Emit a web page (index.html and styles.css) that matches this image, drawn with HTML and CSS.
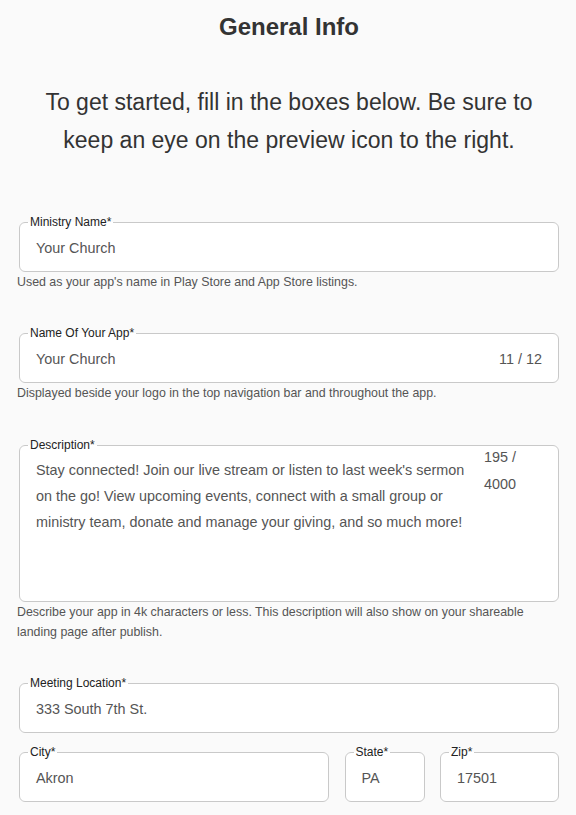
FILE: index.html
```
<!DOCTYPE html>
<html lang="en">
<head>
<meta charset="utf-8">
<title>General Info</title>
<link rel="stylesheet" href="styles.css">
</head>
<body>
<main class="page">
  <h1 class="title">General Info</h1>
  <p class="intro">To get started, fill in the boxes below. Be sure to keep an eye on the preview icon to the right.</p>

  <div class="form">
    <fieldset class="field first">
      <legend class="label">Ministry Name*</legend>
      <div class="value-row"><span class="value">Your Church</span></div>
    </fieldset>
    <p class="helper">Used as your app's name in Play Store and App Store listings.</p>

    <fieldset class="field">
      <legend class="label">Name Of Your App*</legend>
      <div class="value-row"><span class="value">Your Church</span><span class="count">11 / 12</span></div>
    </fieldset>
    <p class="helper">Displayed beside your logo in the top navigation bar and throughout the app.</p>

    <fieldset class="field desc">
      <legend class="label">Description*</legend>
      <div class="desc-body">
        <div class="desc-text">Stay connected! Join our live stream or listen to last week's sermon on the go! View upcoming events, connect with a small group or ministry team, donate and manage your giving, and so much more!</div>
        <div class="desc-count">195 / 4000</div>
      </div>
    </fieldset>
    <p class="helper">Describe your app in 4k characters or less. This description will also show on your shareable landing page after publish.</p>

    <fieldset class="field">
      <legend class="label">Meeting Location*</legend>
      <div class="value-row"><span class="value">333 South 7th St.</span></div>
    </fieldset>

    <div class="row">
      <fieldset class="field">
        <legend class="label">City*</legend>
        <div class="value-row"><span class="value">Akron</span></div>
      </fieldset>
      <fieldset class="field">
        <legend class="label">State*</legend>
        <div class="value-row"><span class="value">PA</span></div>
      </fieldset>
      <fieldset class="field">
        <legend class="label">Zip*</legend>
        <div class="value-row"><span class="value">17501</span></div>
      </fieldset>
    </div>
  </div>
</main>
</body>
</html>
```
FILE: styles.css
```
html, body {
  margin: 0;
  padding: 0;
  background: #fafafa;
}
body {
  font-family: "Liberation Sans", Arial, sans-serif;
  color: #333;
}
.page {
  padding: 0 17px 0 19px;
}
.title {
  margin: 13px 0 0;
  font-size: 24px;
  line-height: 28px;
  font-weight: 700;
  text-align: center;
  color: #333;
}
.intro {
  margin: 42px 0 0;
  font-size: 23px;
  line-height: 38px;
  text-align: center;
  color: #333;
}
.form {
  margin-top: 56px;
}
.field {
  margin: 34px 0 0;
  padding: 0;
  min-width: 0;
  border: 1px solid #c9c9c9;
  border-radius: 6px;
  background: #fff;
}
.field.first {
  margin-top: 0;
}
.field.desc {
  margin-top: 35px;
}
.label {
  margin-left: 8px;
  padding: 0 2px;
  font-size: 12px;
  line-height: 14px;
  color: #222;
}
.value-row {
  display: flex;
  justify-content: space-between;
  align-items: center;
  height: 35px;
  padding: 2px 16px 5px;
  font-size: 14.4px;
  color: #555;
}
.value, .count {
  line-height: 35px;
}
.desc-body {
  display: flex;
  gap: 12px;
  height: 149px;
  padding: 0 16px;
  box-sizing: border-box;
  font-size: 14.4px;
  color: #555;
}
.desc-text {
  flex: 1;
  margin-top: 5px;
  line-height: 26px;
}
.desc-count {
  width: 58px;
  margin-top: -8px;
  line-height: 27px;
}
.helper {
  margin: 0 0 0 -2px;
  font-size: 12.4px;
  line-height: 20px;
  color: #555;
}
.row {
  display: grid;
  grid-template-columns: 1fr 80px 119px;
  column-gap: 15.5px;
  margin-top: 12px;
}
.row .field {
  margin-top: 0;
}
```
